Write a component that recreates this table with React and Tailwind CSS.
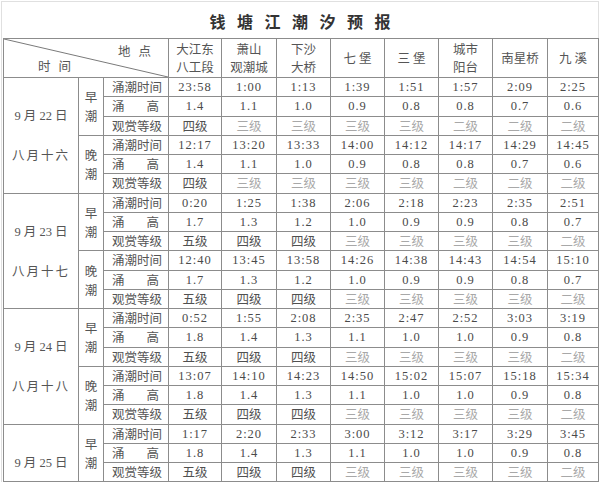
import React from "react";

const places = [
  ["大江东", "八工段"],
  ["萧山", "观潮城"],
  ["下沙", "大桥"],
  ["七 堡"],
  ["三 堡"],
  ["城市", "阳台"],
  ["南星桥"],
  ["九 溪"],
];

const colWidths = [75, 25, 65, 53, 55, 54, 54, 54, 54, 55, 51];

const days = [
  {
    date: ["9", "22"],
    lunar: "八月十六",
    tides: [
      {
        name: "早潮",
        times: ["23:58", "1:00", "1:13", "1:39", "1:51", "1:57", "2:09", "2:25"],
        heights: ["1.4", "1.1", "1.0", "0.9", "0.8", "0.8", "0.7", "0.6"],
        grades: ["四级", "三级", "三级", "三级", "三级", "二级", "二级", "二级"],
      },
      {
        name: "晚潮",
        times: ["12:17", "13:20", "13:33", "14:00", "14:12", "14:17", "14:29", "14:45"],
        heights: ["1.4", "1.1", "1.0", "0.9", "0.8", "0.8", "0.7", "0.6"],
        grades: ["四级", "三级", "三级", "三级", "三级", "二级", "二级", "二级"],
      },
    ],
  },
  {
    date: ["9", "23"],
    lunar: "八月十七",
    tides: [
      {
        name: "早潮",
        times: ["0:20", "1:25", "1:38", "2:06", "2:18", "2:23", "2:35", "2:51"],
        heights: ["1.7", "1.3", "1.2", "1.0", "0.9", "0.9", "0.8", "0.7"],
        grades: ["五级", "四级", "四级", "三级", "三级", "三级", "三级", "二级"],
      },
      {
        name: "晚潮",
        times: ["12:40", "13:45", "13:58", "14:26", "14:38", "14:43", "14:54", "15:10"],
        heights: ["1.7", "1.3", "1.2", "1.0", "0.9", "0.9", "0.8", "0.7"],
        grades: ["五级", "四级", "四级", "三级", "三级", "三级", "三级", "二级"],
      },
    ],
  },
  {
    date: ["9", "24"],
    lunar: "八月十八",
    tides: [
      {
        name: "早潮",
        times: ["0:52", "1:55", "2:08", "2:35", "2:47", "2:52", "3:03", "3:19"],
        heights: ["1.8", "1.4", "1.3", "1.1", "1.0", "1.0", "0.9", "0.8"],
        grades: ["五级", "四级", "四级", "三级", "三级", "三级", "三级", "二级"],
      },
      {
        name: "晚潮",
        times: ["13:07", "14:10", "14:23", "14:50", "15:02", "15:07", "15:18", "15:34"],
        heights: ["1.8", "1.4", "1.3", "1.1", "1.0", "1.0", "0.9", "0.8"],
        grades: ["五级", "四级", "四级", "三级", "三级", "三级", "三级", "二级"],
      },
    ],
  },
  {
    // the screenshot stops after this day's morning tide
    date: ["9", "25"],
    lunar: null,
    tides: [
      {
        name: "早潮",
        times: ["1:17", "2:20", "2:33", "3:00", "3:12", "3:17", "3:29", "3:45"],
        heights: ["1.8", "1.4", "1.3", "1.1", "1.0", "1.0", "0.9", "0.8"],
        grades: ["五级", "四级", "四级", "三级", "三级", "三级", "三级", "二级"],
      },
    ],
  },
];

const cell = "border border-[#8c8c8c] p-0 text-center align-middle leading-[16px]";
const num = "font-['Liberation_Serif','Noto_Sans_CJK_SC',serif] text-[12.5px] tracking-[1px] text-[#4a4a4a]";

// label spread across the cell, like 涌　　高
const Label = ({ chars }) => (
  <div className="flex justify-between pl-[8px] pr-[9px] text-[12.5px] text-[#555]">
    {chars.map((c, i) => (
      <span key={i}>{c}</span>
    ))}
  </div>
);

const gradeColor = (g) => (g === "三级" || g === "二级" ? "text-[#a8a8a8]" : "text-[#505050]");

const DateText = ({ date }) => (
  <div>
    <span className="font-['Liberation_Serif',serif]">{date[0]}</span>
    <span className="mx-[3px]">月</span>
    <span className="font-['Liberation_Serif',serif]">{date[1]}</span>
    <span className="ml-[3px]">日</span>
  </div>
);

export default function App() {
  return (
    <div className="w-[600px] h-[484px] overflow-hidden bg-white font-['Noto_Sans_CJK_SC',sans-serif] text-[#4a4a4a]">
      <div className="ml-[1px] mt-[1px] w-[598px] border border-b-0 border-[#e0e0e0]">
        <div className="h-[36px] flex items-center justify-center pt-[2px]">
          <h1 className="font-['Noto_Sans_CJK_SC',serif] text-[16px] font-bold tracking-[11.5px] mr-[-11.5px] text-[#333]">
            钱塘江潮汐预报
          </h1>
        </div>
        <table className="table-fixed border-collapse w-[595px] ml-[1px]">
          <colgroup>
            {colWidths.map((w, i) => (
              <col key={i} style={{ width: w }} />
            ))}
          </colgroup>
          <tbody>
            <tr className="h-[39px]">
              <td colSpan={3} className={`${cell} relative`}>
                <svg className="absolute inset-0 w-full h-full" viewBox="0 0 100 100" preserveAspectRatio="none">
                  <line x1="0" y1="0" x2="100" y2="100" stroke="#7a7a7a" strokeWidth="1" vectorEffect="non-scaling-stroke" />
                </svg>
                <div className="relative h-[38px] text-[12.5px] text-[#555]">
                  <span className="absolute right-[9px] top-[4px] tracking-[8px]">地点</span>
                  <span className="absolute left-[34px] bottom-[3px] tracking-[8px]">时间</span>
                </div>
              </td>
              {places.map((p, i) => (
                <td key={i} className={`${cell} text-[12.5px] !leading-[18px] text-[#555]`}>
                  {p.map((line, j) => (
                    <div key={j}>{line}</div>
                  ))}
                </td>
              ))}
            </tr>
            {days.map((day) =>
              day.tides.map((tide, ti) => {
                const rows = [
                  { label: ["涌", "潮", "时", "间"], values: tide.times, kind: "num" },
                  { label: ["涌", "高"], values: tide.heights, kind: "num" },
                  { label: ["观", "赏", "等", "级"], values: tide.grades, kind: "grade" },
                ];
                return rows.map((row, ri) => (
                  <tr key={day.date[1] + ti + ri} className="h-[19.25px]">
                    {ti === 0 && ri === 0 && (
                      <td
                        rowSpan={day.tides.length * 3}
                        className={`${cell} ${day.lunar ? "" : "!align-bottom pb-[10px]"}`}
                      >
                        <div className="flex flex-col items-center gap-[23px] text-[12.5px] text-[#555]">
                          <DateText date={day.date} />
                          {day.lunar && <div className="tracking-[2px]">{day.lunar}</div>}
                        </div>
                      </td>
                    )}
                    {ri === 0 && (
                      <td rowSpan={3} className={cell}>
                        <div className="flex flex-col items-center text-[12.5px] leading-[19px] text-[#555]">
                          <span>{tide.name[0]}</span>
                          <span>{tide.name[1]}</span>
                        </div>
                      </td>
                    )}
                    <td className={cell}>
                      <Label chars={row.label} />
                    </td>
                    {row.values.map((v, vi) => (
                      <td
                        key={vi}
                        className={`${cell} ${
                          row.kind === "num" ? num : `text-[12.5px] ${gradeColor(v)}`
                        }`}
                      >
                        {v}
                      </td>
                    ))}
                  </tr>
                ));
              })
            )}
          </tbody>
        </table>
      </div>
    </div>
  );
}
